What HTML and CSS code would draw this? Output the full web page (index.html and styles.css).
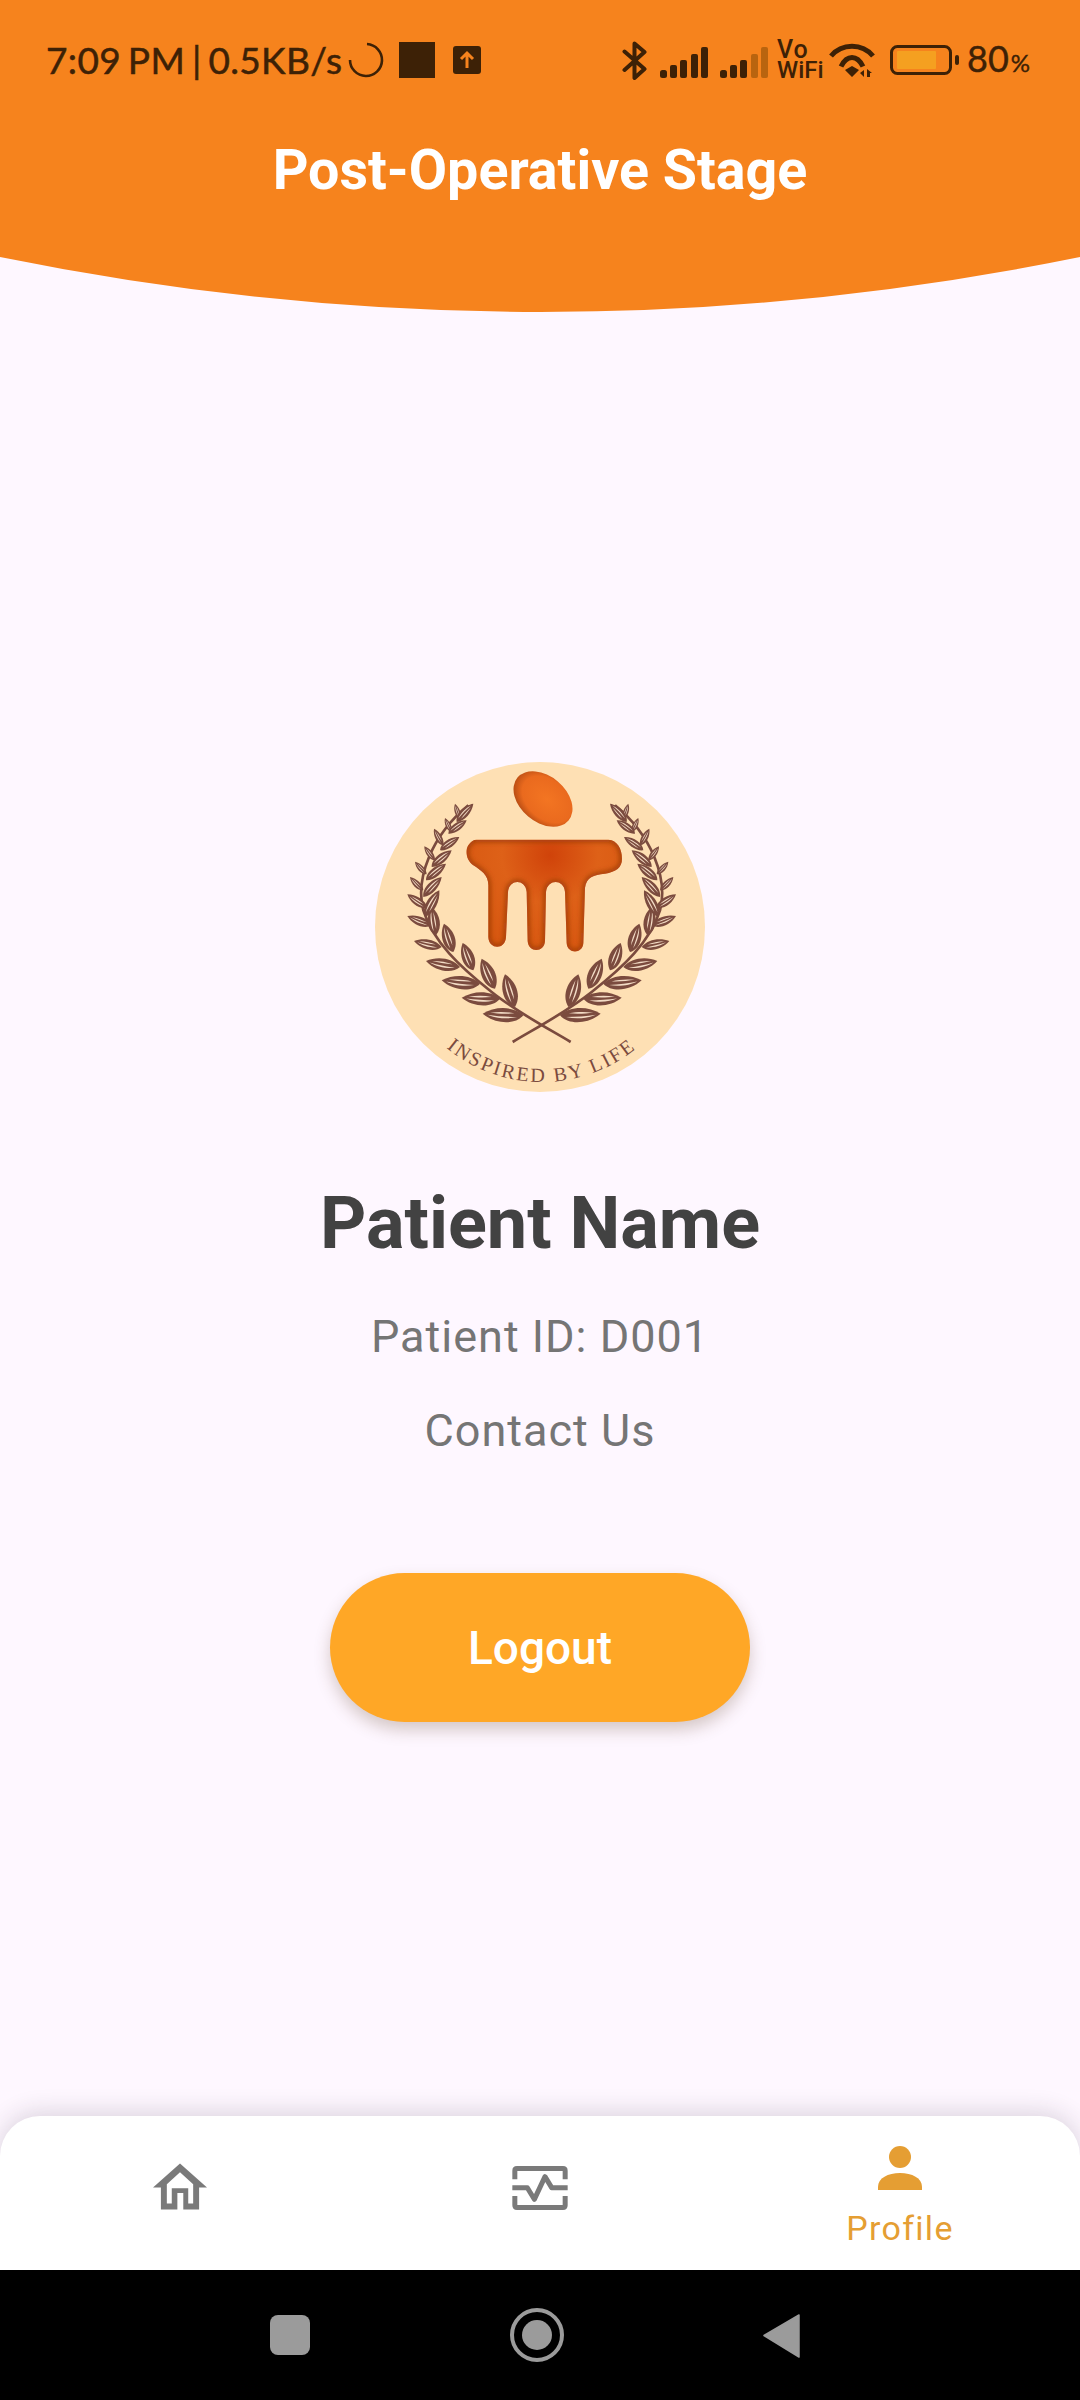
FILE: index.html
```html
<!DOCTYPE html>
<html lang="en">
<head>
<meta charset="utf-8">
<title>Post-Operative Stage</title>
<link rel="stylesheet" href="styles.css">
</head>
<body>
<div class="app">
  <header class="header">
    <div class="statusbar">
      <div class="status-left">
        <span class="status-text">7:09 PM | 0.5KB/s</span>
        <svg class="spinner" viewBox="0 0 37 36"><path d="M19 2A16 16 0 1 1 2 18" fill="none" stroke="#3d2106" stroke-width="2.6"/></svg>
        <span class="square"></span>
        <svg class="upload" viewBox="0 0 28 28"><rect width="28" height="28" rx="3" fill="#3d2106"/><path d="M14 22V8M8 13l6-6 6 6" fill="none" stroke="#f6831d" stroke-width="3"/></svg>
      </div>
      <div class="status-right">
        <svg class="bluetooth" viewBox="0 0 25 39"><path d="M2.500 10.500 22.500 28 12.500 37V2.500L22.500 11 2.500 29" fill="none" stroke="#3d2106" stroke-width="4" stroke-linejoin="round" stroke-linecap="round"/></svg>
        <svg class="signal" viewBox="0 0 48 31"><g fill="#3d2106"><rect x="0" y="23" width="7" height="8" rx="2.500"/><rect x="10" y="18" width="7" height="13" rx="2"/><rect x="20" y="13" width="7" height="18" rx="2"/><rect x="31" y="7" width="7" height="24" rx="2"/><rect x="41" y="0" width="7" height="31" rx="2"/></g></svg>
        <svg class="signal second" viewBox="0 0 48 31"><g fill="#3d2106"><rect x="0" y="23" width="7" height="8" rx="2.500"/><rect x="10" y="18" width="7" height="13" rx="2"/><rect x="20" y="13" width="7" height="18" rx="2"/></g><g fill="#b9640f"><rect x="31" y="7" width="7" height="24" rx="2"/><rect x="41" y="0" width="7" height="31" rx="2"/></g></svg>
        <span class="vowifi"><span class="vo">Vo</span><span>WiFi</span></span>
        <svg class="wifi" viewBox="0 0 46 34"><g fill="none" stroke="#3d2106" stroke-width="5"><path d="M2 13C13 0 33 0 44 13"/><path d="M12 23.500C18 11.500 28 11.500 34 23.500"/></g><path d="M16 27 23 23 30 27 23 34ZM31 30l4-3v7ZM38 26l5 4h-2v4h-3Z" fill="#3d2106"/></svg>
        <svg class="battery" viewBox="0 0 69 30"><rect x="1.500" y="1.500" width="59" height="27" rx="6" fill="none" stroke="#3d2106" stroke-width="3"/><rect x="7" y="6" width="39" height="18" rx="1" fill="#f5a020"/><rect x="65" y="10" width="4" height="10" rx="2" fill="#3d2106"/></svg>
        <span class="percent">80<small>%</small></span>
      </div>
    </div>
    <h1 class="title">Post-Operative Stage</h1>
  </header>
  <svg class="curve" viewBox="0 0 1080 55" preserveAspectRatio="none"><path d="M0 0Q540 110 1080 0Z" fill="#f6831d"/></svg>

  <main class="profile">
    <svg class="logo" viewBox="45 35 990 990">
      <defs>
        <radialGradient id="pillarFill" gradientUnits="userSpaceOnUse" cx="570" cy="315" r="320">
          <stop offset="0" stop-color="#d0430a"/>
          <stop offset=".45" stop-color="#de6118"/>
          <stop offset="1" stop-color="#d6560f"/>
        </radialGradient>
        <radialGradient id="ballFill" cx=".55" cy=".45" r=".6">
          <stop offset="0" stop-color="#f37522"/>
          <stop offset=".7" stop-color="#ea6a1e"/>
          <stop offset="1" stop-color="#b04812"/>
        </radialGradient>
        <filter id="soft" x="-20%" y="-20%" width="140%" height="140%"><feGaussianBlur stdDeviation="8"/></filter>
        <path id="pillarShape" d="M350 268H745C772 270 786 295 786 325C786 352 768 364 735 370C700 374 680 380 675 412L670 578C668 612 622 612 620 578L615 425C612 385 562 385 558 425L555 572C553 608 505 608 503 572L500 425C497 385 447 385 444 425L438 560C436 600 386 598 385 560L385 405C385 372 362 360 340 345C318 330 315 300 325 285C332 274 340 268 350 268Z"/>
        <clipPath id="pillarClip"><use href="#pillarShape"/></clipPath>
        <g id="leaf">
          <path d="M0 0C.2-.26.7-.24 1 0 .7.2.25.22 0 0Z" fill="#7b4b3e"/>
          <path d="M.15-.05C.4-.12.7-.1.88-.02.65-.05.4-.05.15-.05ZM.22.04C.45.01.65.02.82.03.6.07.4.07.22.04Z" fill="#f3dcc6"/>
        </g>
        <g id="leafWide">
          <path d="M0 0C.2-.3.7-.28 1 0 .7.26.25.28 0 0Z" fill="#7b4b3e"/>
          <path d="M.15-.06C.4-.14.7-.11.88-.03.65-.07.4-.06.15-.06ZM.22.04C.45.01.65.02.82.03.6.07.4.08.22.04Z" fill="#f3dcc6"/>
        </g>
        <g id="wreath">
          <path d="M632 875C560 832 470 785 395 725 300 650 220 575 190 480 165 385 215 255 325 165" fill="none" stroke="#7b4b3e" stroke-width="8"/>
          <use href="#leaf" transform="matrix(-122 -5 5 -122 490 795)"/>
          <use href="#leaf" transform="matrix(-115 -3 3 -115 420 745)"/>
          <use href="#leaf" transform="matrix(-115 -10 10 -115 360 700)"/>
          <use href="#leaf" transform="matrix(-102 -18 18 -102 300 650)"/>
          <use href="#leaf" transform="matrix(-83 -18 18 -83 245 590)"/>
          <use href="#leaf" transform="matrix(-73 -28 28 -73 215 525)"/>
          <use href="#leaf" transform="matrix(-60 -40 40 -60 202 472)"/>
          <use href="#leaf" transform="matrix(-40 -40 40 -40 190 420)"/>
          <use href="#leaf" transform="matrix(-35 -38 38 -35 200 372)"/>
          <use href="#leaf" transform="matrix(-32 -42 42 -32 225 330)"/>
          <use href="#leaf" transform="matrix(-28 -50 50 -28 250 285)"/>
          <use href="#leaf" transform="matrix(-20 -42 42 -20 275 245)"/>
          <use href="#leaf" transform="matrix(-15 -45 45 -15 300 205)"/>
          <use href="#leafWide" transform="matrix(-30 -98 98 -30 465 770)"/>
          <use href="#leafWide" transform="matrix(-40 -90 90 -40 405 715)"/>
          <use href="#leafWide" transform="matrix(-32 -82 82 -32 340 660)"/>
          <use href="#leafWide" transform="matrix(-28 -85 85 -28 280 605)"/>
          <use href="#leafWide" transform="matrix(-13 -85 85 -13 228 555)"/>
          <use href="#leaf" transform="matrix(43 -80 80 43 195 500)"/>
          <use href="#leaf" transform="matrix(55 -60 60 55 190 440)"/>
          <use href="#leaf" transform="matrix(60 -50 50 60 198 390)"/>
          <use href="#leaf" transform="matrix(60 -50 50 60 215 350)"/>
          <use href="#leaf" transform="matrix(58 -40 40 58 240 300)"/>
          <use href="#leaf" transform="matrix(55 -40 40 55 265 250)"/>
          <use href="#leaf" transform="matrix(50 -55 55 50 290 215)"/>
        </g>
      </defs>
      <circle cx="540" cy="530" r="495" fill="#fee0b4"/>
      <ellipse cx="549" cy="146" rx="100" ry="69" transform="rotate(40 549 146)" fill="url(#ballFill)"/>
      <use href="#pillarShape" fill="url(#pillarFill)"/>
      <g clip-path="url(#pillarClip)"><use href="#pillarShape" fill="none" stroke="#a03c0a" stroke-width="14" filter="url(#soft)"/></g>
      <use href="#wreath"/>
      <use href="#wreath" transform="matrix(-1 0 0 1 1090 0)"/>
      <path id="mottoArc" d="M200 834A450 450 0 0 0 890 834" fill="none"/>
      <text class="motto"><textPath href="#mottoArc" startOffset="50%" text-anchor="middle">INSPIRED BY LIFE</textPath></text>
    </svg>
    <h2 class="name">Patient Name</h2>
    <p class="detail id">Patient ID: D001</p>
    <p class="detail contact">Contact Us</p>
    <button class="logout" type="button">Logout</button>
  </main>

  <nav class="tabs">
    <div class="tab">
      <svg class="icon-home" viewBox="68 70 164 140"><path fill-rule="evenodd" d="M150 70 232 143H208V210H160V160H142V210H92V143H68ZM150 97 110 133V192H125V145H175V192H190V133Z" fill="#7a7a7a"/></svg>
    </div>
    <div class="tab">
      <svg class="icon-pulse" viewBox="1147 78 166 132"><path d="M1154.500 118V92Q1154.500 85.500 1161 85.500H1299Q1305.500 85.500 1305.500 92V118M1154.500 168V196Q1154.500 202.500 1161 202.500H1299Q1305.500 202.500 1305.500 196V168M1147 143H1192L1213 178 1245 110 1265 143H1313" fill="none" stroke="#7a7a7a" stroke-width="15" stroke-linejoin="round"/></svg>
    </div>
    <div class="tab active">
      <svg class="icon-person" viewBox="0 0 44 44"><circle cx="22" cy="11" r="11"/><path d="M0 44V41C0 32 10 27 22 27S44 32 44 41V44Z"/></svg>
      <span class="tab-label">Profile</span>
    </div>
  </nav>

  <div class="sysnav">
    <span class="sys-square"></span>
    <svg class="sys-circle" viewBox="0 0 54 54"><circle cx="27" cy="27" r="25" fill="none" stroke="#9b9b9b" stroke-width="4"/><circle cx="27" cy="27" r="15" fill="#9b9b9b"/></svg>
    <svg class="sys-back" viewBox="0 0 37 45"><path d="M36 2 1 22.500 36 44Z" fill="#9b9b9b" stroke="#9b9b9b" stroke-width="1.500" stroke-linejoin="round"/></svg>
  </div>
</div>
</body>
</html>
```

FILE: styles.css
```css
* { box-sizing: border-box; }
html, body { margin: 0; padding: 0; }
body { width: 1080px; height: 2400px; overflow: hidden; background: #fef7ff; font-family: Roboto, "Liberation Sans", sans-serif; }
.app { width: 1080px; height: 2400px; display: flex; flex-direction: column; }

.header { height: 257px; background: #f6831d; flex: none; overflow: hidden; }
.statusbar { display: flex; justify-content: space-between; align-items: center; height: 36px; margin-top: 42px; padding: 0 53px 0 46px; color: #3d2106; }
.status-left, .status-right { display: flex; align-items: center; }
.status-text { font-family: Lato, sans-serif; font-size: 37px; line-height: 36px; width: 285px; white-space: nowrap; letter-spacing: .35px; word-spacing: -3px; -webkit-text-stroke: .5px #3d2106; }
.spinner { width: 37px; height: 36px; margin-left: 17px; }
.square { width: 36px; height: 36px; margin-left: 14px; background: #3d2106; }
.upload { width: 28px; height: 28px; margin-left: 18px; }
.bluetooth { width: 25px; height: 39px; }
.signal { width: 48px; height: 31px; margin-left: 13px; margin-top: 4px; }
.signal.second { margin-left: 12px; }
.vowifi { display: flex; flex-direction: column; margin-left: 9px; width: 41px; font-family: Roboto, sans-serif; font-size: 24px; font-weight: 500; line-height: 21px; }
.vo { font-size: 25px; letter-spacing: 1px; }
.wifi { width: 46px; height: 34px; margin-left: 11px; }
.battery { width: 69px; height: 30px; margin-left: 15px; }
.percent { margin-left: 8px; width: 60px; font-family: Lato, sans-serif; font-size: 36px; line-height: 36px; white-space: nowrap; -webkit-text-stroke: .4px #3d2106; }
.percent small { font-size: 24px; margin-left: 2px; }

.title { margin: 60px 0 0; text-align: center; color: #fff; font-size: 55.600px; line-height: 64px; font-weight: 700; }
.curve { display: block; flex: none; width: 1080px; height: 55px; }

.profile { flex: 1; display: flex; flex-direction: column; align-items: center; padding-top: 450px; }
.logo { width: 330px; height: 330px; flex: none; }
.motto { font-family: "Liberation Serif", serif; font-size: 60px; letter-spacing: 7px; fill: #7b4b3e; }
.name { margin: 90px 0 0; font-size: 72px; line-height: 84px; font-weight: 700; color: #424242; }
.detail { margin: 0; font-size: 45px; line-height: 52px; letter-spacing: 1px; color: #757575; }
.id { margin-top: 45px; }
.contact { margin-top: 42px; }
.logout { width: 420px; height: 149px; margin-top: 116px; border: 0; border-radius: 75px; background: #ffa726; color: #fff; font-family: Roboto, sans-serif; font-size: 46px; font-weight: 500; box-shadow: 0 8px 16px rgba(90, 60, 30, .25); }

.tabs { flex: none; height: 154px; display: grid; grid-template-columns: repeat(3, 360px); background: #fff; border-radius: 40px 40px 0 0; box-shadow: 0 -4px 24px rgba(40, 30, 50, .16); }
.tab { display: flex; flex-direction: column; align-items: center; padding-top: 47px; }
.icon-home { width: 54px; height: 47px; }
.icon-pulse { width: 56px; height: 44px; margin-top: 3px; }
.tab.active { padding-top: 30px; color: #e59e33; }
.icon-person { width: 44px; height: 44px; fill: #e59e33; }
.tab-label { margin-top: 18px; font-size: 34px; line-height: 40px; letter-spacing: 1.300px; }

.sysnav { flex: none; height: 130px; background: #000; display: flex; align-items: center; }
.sys-square { width: 40px; height: 40px; margin-left: 270px; border-radius: 8px; background: #9b9b9b; }
.sys-circle { width: 54px; height: 54px; margin-left: 200px; }
.sys-back { width: 37px; height: 45px; margin-left: 199px; }
```
